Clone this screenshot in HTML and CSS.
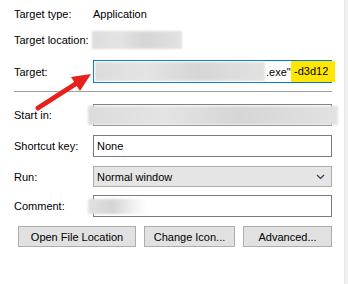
FILE: index.html
```html
<!DOCTYPE html>
<html lang="en">
<head>
  <meta charset="UTF-8">
  <title>Shortcut Properties</title>
  <link rel="stylesheet" href="styles.css">
</head>
<body>

<div class="panel">
  <div class="row row-first">
    <span class="label">Target type:</span>
    <span class="value">Application</span>
  </div>
  <div class="row">
    <span class="label">Target location:</span>
    <span class="blur blur-location"></span>
  </div>
  <div class="row row-target">
    <span class="label">Target:</span>
    <div class="field field-focus">
      <span class="blur blur-target"></span>
      <span class="exe">.exe"</span>
      <span class="mark">-d3d12</span>
    </div>
  </div>

  <div class="separator"></div>

  <div class="row">
    <span class="label">Start in:</span>
    <div class="field">
      <span class="blur blur-start"></span>
    </div>
  </div>
  <div class="row">
    <span class="label">Shortcut key:</span>
    <div class="field"><span class="field-text">None</span></div>
  </div>
  <div class="row row-run">
    <span class="label">Run:</span>
    <div class="select">
      <span class="field-text">Normal window</span>
      <svg class="chevron" width="9" height="6" viewBox="0 0 9 6"><path d="M1 1 L4.5 4.5 L8 1" fill="none" stroke="#2b3a67" stroke-width="1.2"/></svg>
    </div>
  </div>
  <div class="row">
    <span class="label">Comment:</span>
    <div class="field">
      <span class="blur blur-comment"></span>
    </div>
  </div>

  <div class="buttons">
    <button class="btn btn-open">Open File Location</button>
    <button class="btn btn-icon">Change Icon...</button>
    <button class="btn btn-adv">Advanced...</button>
  </div>
</div>

<div class="scroll-edge"></div>

<!-- seta vermelha por cima do campo -->
<svg class="arrow" width="70" height="50" viewBox="0 0 70 50">
  <path d="M8 44 L47 19" stroke="#e8201c" stroke-width="5" stroke-linecap="round"/>
  <polygon points="61,10 41,13 50,27" fill="#e8201c"/>
</svg>

</body>
</html>
```

FILE: styles.css
```css
body {
  margin: 0;
  width: 348px;
  height: 284px;
  background: #fff;
  font-family: "Liberation Sans", Arial, sans-serif;
  font-size: 11px;
  color: #000;
  position: relative;
  overflow: hidden;
}

.panel {
  padding: 3px 0 0 14px;
  width: 318px;
}

.row {
  display: grid;
  grid-template-columns: 79px 239px;
  align-items: center;
  height: 22px;
  margin-bottom: 9px;
}

.row-first {
  margin-bottom: 4px;
}

.row-target {
  height: 23px;
  margin-bottom: 8px;
}

.row-run {
  height: 21px;
  margin-bottom: 8px;
}

.field {
  box-sizing: border-box;
  height: 100%;
  border: 1px solid #7a7a7a;
  position: relative;
  display: flex;
  align-items: center;
}

.field-focus {
  border-color: #0078d7;
}

.field-text {
  padding-left: 3px;
}

.blur {
  display: block;
  background: linear-gradient(90deg, #dcdcdc, #e4e4e4 30%, #d6d6d6 60%, #e2e2e2);
  filter: blur(1px);
}

.blur-location {
  width: 90px;
  height: 18px;
  margin-left: -1px;
}

.blur-target {
  position: absolute;
  left: 1px;
  top: 1px;
  width: 170px;
  height: 19px;
}

.exe {
  position: absolute;
  left: 172px;
}

.mark {
  position: absolute;
  left: 197px;
  top: 0;
  width: 44px;
  height: 21px;
  line-height: 21px;
  padding-left: 3px;
  box-sizing: border-box;
  background: #ffe600;
}

.blur-start {
  position: absolute;
  left: -6px;
  top: 1px;
  width: 250px;
  height: 19px;
}

.blur-comment {
  position: absolute;
  left: -6px;
  top: 3px;
  width: 60px;
  height: 15px;
  background: linear-gradient(90deg, #e2e2e2, #d4d4d4 40%, #f4f4f4 80%, #fff);
}

.separator {
  height: 1px;
  background: #a0a0a0;
  margin: 0 0 12px 0;
  width: 318px;
}

.select {
  box-sizing: border-box;
  height: 100%;
  background: #e5e5e5;
  border: 1px solid #adadad;
  display: flex;
  align-items: center;
  justify-content: space-between;
  padding-right: 6px;
}

.buttons {
  display: flex;
  gap: 8px;
  padding-left: 4px;
}

.btn {
  height: 21px;
  box-sizing: border-box;
  background: #e1e1e1;
  border: 1px solid #adadad;
  font-family: inherit;
  font-size: 11px;
  color: #000;
  padding: 0;
}

.btn-open {
  width: 118px;
}

.btn-icon {
  width: 91px;
}

.btn-adv {
  width: 89px;
}

.scroll-edge {
  position: absolute;
  right: 0;
  top: 0;
  width: 3px;
  height: 284px;
  background: #f0f0f0;
  border-left: 1px solid #e6e6e6;
}

.arrow {
  position: absolute;
  left: 30px;
  top: 64px;
}
```
